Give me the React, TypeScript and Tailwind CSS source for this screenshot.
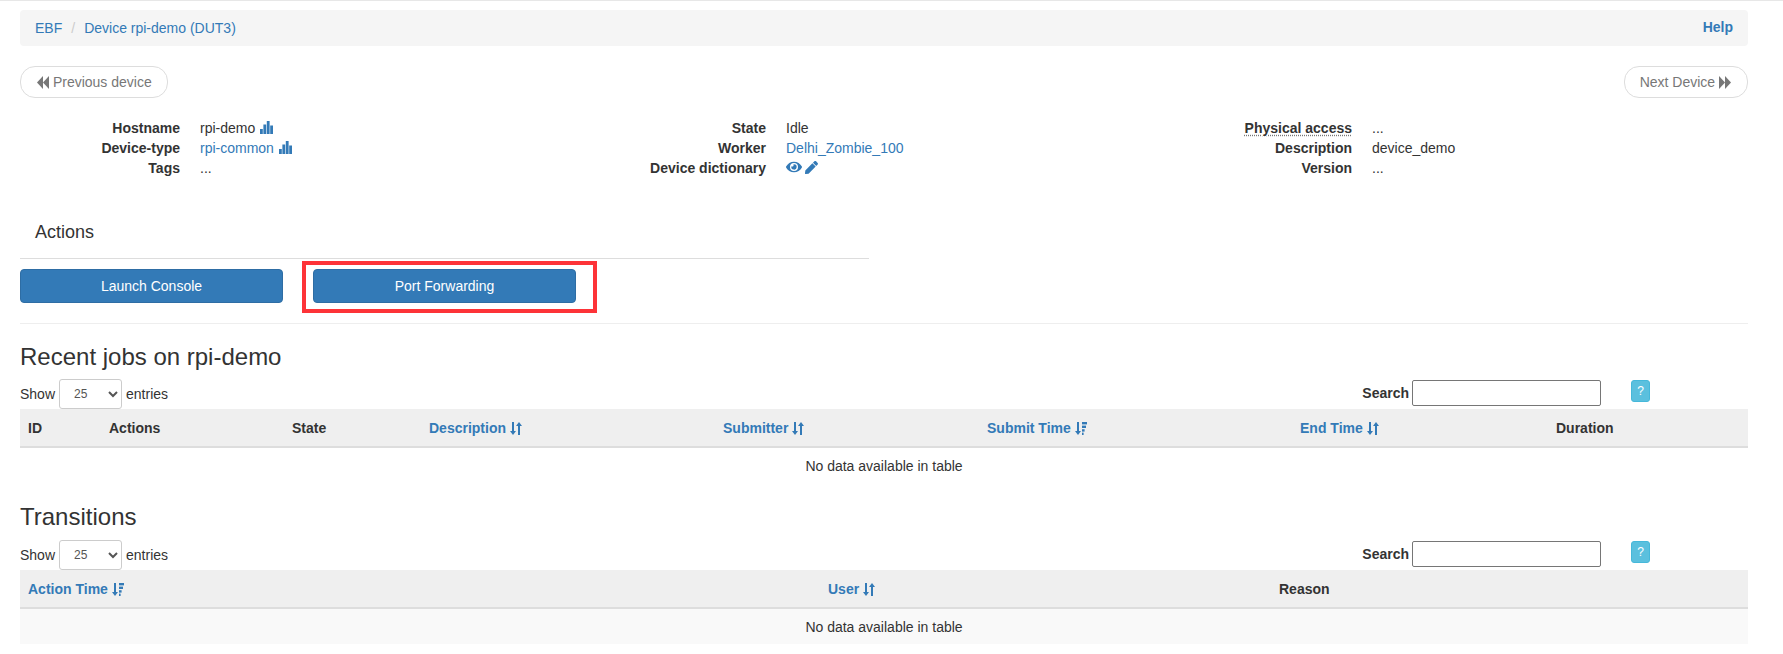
import React from 'react';
import { FaEye, FaPen } from 'react-icons/fa';

function StatsIcon() {
  return (
    <svg viewBox="0 0 13 13" className="inline-block w-[13px] h-[13px] align-[-1px] ml-[5px] fill-[#337ab7]">
      <rect x="0" y="8" width="2.8" height="5" />
      <rect x="3.4" y="3.5" width="2.8" height="9.5" />
      <rect x="6.8" y="0" width="2.8" height="13" />
      <rect x="10.2" y="4.5" width="2.8" height="8.5" />
    </svg>
  );
}

function BackIcon({ flip }: { flip?: boolean }) {
  return (
    <svg viewBox="0 0 12 13" className={`inline-block w-[12px] h-[13px] align-[-2px] fill-[#777] ${flip ? 'rotate-180' : ''}`}>
      <polygon points="6,0 6,13 0,6.5" />
      <polygon points="12,0 12,13 6,6.5" />
    </svg>
  );
}

function SortIcon() {
  return (
    <svg viewBox="0 0 12 13" className="inline-block w-[12px] h-[13px] align-[-2px] ml-[4px] fill-[#337ab7]">
      <polygon points="2,0 4,0 4,9 6,9 3,13 0,9 2,9" />
      <polygon points="8,13 10,13 10,4 12,4 9,0 6,4 8,4" />
    </svg>
  );
}

function SortDescIcon() {
  return (
    <svg viewBox="0 0 12 13" className="inline-block w-[12px] h-[13px] align-[-2px] ml-[4px] fill-[#337ab7]">
      <polygon points="2,0 4,0 4,9 6,9 3,13 0,9 2,9" />
      <rect x="7" y="0" width="5" height="2.4" />
      <rect x="7" y="3.6" width="4" height="2.4" />
      <rect x="7" y="7.2" width="2.6" height="2.4" />
      <rect x="7" y="10.6" width="1.6" height="2.4" />
    </svg>
  );
}

function InfoRow({ label, children, abbr }: { label: string; children: React.ReactNode; abbr?: boolean }) {
  return (
    <div className="flex">
      <div className="w-[160px] text-right font-bold shrink-0">
        {abbr ? <span className="underline decoration-dotted decoration-[#777] underline-offset-[2px]">{label}</span> : label}
      </div>
      <div className="ml-[20px]">{children}</div>
    </div>
  );
}

type Column = { label: string; width: number; sort?: 'both' | 'desc' };

function DataBlock({ title, columns, striped, rowClass }: { title: string; columns: Column[]; striped?: boolean; rowClass: string }) {
  return (
    <div>
      <h2 className="text-[24px] leading-[26px] font-normal">{title}</h2>
      <div className={`flex justify-between items-start ${rowClass}`}>
        <label className="flex items-center h-[30px] gap-[4px]">
          Show
          <select className="w-[63px] h-[30px] text-[12px] text-[#555] bg-white border border-[#ccc] rounded-[3px] px-[10px]">
            <option>25</option>
          </select>
          entries
        </label>
        <div className="flex items-start mt-[1px] mr-[98px]">
          <label className="font-bold leading-[26px]">Search</label>
          <input className="w-[189px] h-[26px] ml-[3px] bg-white border border-[#767676] rounded-[2px]" />
          <button className="w-[19px] h-[22px] ml-[30px] bg-[#5bc0de] border border-[#46b8da] rounded-[3px] text-white text-[12px] leading-[18px]">?</button>
        </div>
      </div>
      <table className="w-full table-fixed border-collapse">
        <thead>
          <tr className="bg-[#efefef] border-b-2 border-[#ddd]">
            {columns.map((col) => (
              <th
                key={col.label}
                style={{ width: col.width }}
                className={`h-[38px] px-[8px] text-left font-bold ${col.sort ? 'text-[#337ab7]' : ''}`}
              >
                {col.label}
                {col.sort === 'both' && <SortIcon />}
                {col.sort === 'desc' && <SortDescIcon />}
              </th>
            ))}
          </tr>
        </thead>
        <tbody>
          <tr className={striped ? 'bg-[#f9f9f9]' : ''}>
            <td colSpan={columns.length} className="h-[36px] text-center">No data available in table</td>
          </tr>
        </tbody>
      </table>
    </div>
  );
}

const jobColumns: Column[] = [
  { label: 'ID', width: 81 },
  { label: 'Actions', width: 183 },
  { label: 'State', width: 137 },
  { label: 'Description', width: 294, sort: 'both' },
  { label: 'Submitter', width: 264, sort: 'both' },
  { label: 'Submit Time', width: 313, sort: 'desc' },
  { label: 'End Time', width: 256, sort: 'both' },
  { label: 'Duration', width: 200 },
];

const transitionColumns: Column[] = [
  { label: 'Action Time', width: 800, sort: 'desc' },
  { label: 'User', width: 451, sort: 'both' },
  { label: 'Reason', width: 477 },
];

export default function App() {
  return (
    <div className="font-['Liberation_Sans',Arial,sans-serif] text-[14px] leading-[20px] text-[#333] bg-white border-t border-[#e7e7e7] pt-[9px] pl-[20px] pr-[35px] h-[654px] overflow-hidden">
      {/* Breadcrumb */}
      <div className="flex justify-between h-[36px] bg-[#f5f5f5] rounded-[4px] px-[15px] py-[8px]">
        <div className="flex">
          <a className="text-[#337ab7]">EBF</a>
          <span className="text-[#ccc] px-[9px]">/</span>
          <a className="text-[#337ab7]">Device rpi-demo (DUT3)</a>
        </div>
        <a className="text-[#337ab7] font-bold -mt-[1px]">Help</a>
      </div>

      {/* Pager */}
      <div className="flex justify-between mt-[20px]">
        <a className="h-[32px] pl-[16px] pr-[15px] py-[5px] border border-[#ddd] rounded-[15px] text-[#777]">
          <BackIcon /> Previous device
        </a>
        <a className="h-[32px] pl-[15px] pr-[16px] py-[5px] border border-[#ddd] rounded-[15px] text-[#777]">
          Next Device <BackIcon flip />
        </a>
      </div>

      {/* Device info */}
      <div className="grid grid-cols-3 gap-[30px] w-[1728px] mt-[20px]">
        <div>
          <InfoRow label="Hostname">rpi-demo<StatsIcon /></InfoRow>
          <InfoRow label="Device-type"><a className="text-[#337ab7]">rpi-common</a><StatsIcon /></InfoRow>
          <InfoRow label="Tags">...</InfoRow>
        </div>
        <div>
          <InfoRow label="State">Idle</InfoRow>
          <InfoRow label="Worker"><a className="text-[#337ab7]">Delhi_Zombie_100</a></InfoRow>
          <InfoRow label="Device dictionary">
            <span className="flex items-center gap-[3px] h-[20px] -mt-[1px] text-[#337ab7]">
              <FaEye className="w-[16px] h-[16px]" />
              <FaPen className="w-[13px] h-[13px]" />
            </span>
          </InfoRow>
        </div>
        <div>
          <InfoRow label="Physical access" abbr>...</InfoRow>
          <InfoRow label="Description">device_demo</InfoRow>
          <InfoRow label="Version">...</InfoRow>
        </div>
      </div>

      {/* Actions */}
      <div className="w-[849px] mt-[35px]">
        <div className="text-[18px] leading-[20px] px-[15px] pt-[9px] pb-[16px] border-b border-[#ddd]">Actions</div>
        <div className="flex gap-[30px] mt-[10px]">
          <button className="w-[263px] h-[34px] bg-[#337ab7] border border-[#2e6da4] rounded-[4px] text-white">Launch Console</button>
          <div className="relative">
            <button className="w-[263px] h-[34px] bg-[#337ab7] border border-[#2e6da4] rounded-[4px] text-white">Port Forwarding</button>
            <div className="absolute -left-[11px] -top-[8px] w-[295px] h-[52px] border-[4px] border-[#fd3338]" />
          </div>
        </div>
      </div>
      <hr className="mt-[20px] border-[#eee]" />

      {/* Tables */}
      <div className="mt-[20px]">
        <DataBlock title="Recent jobs on rpi-demo" columns={jobColumns} rowClass="mt-[9px]" />
      </div>
      <div className="mt-[21px]">
        <DataBlock title="Transitions" columns={transitionColumns} rowClass="mt-[10px]" striped />
      </div>
    </div>
  );
}
